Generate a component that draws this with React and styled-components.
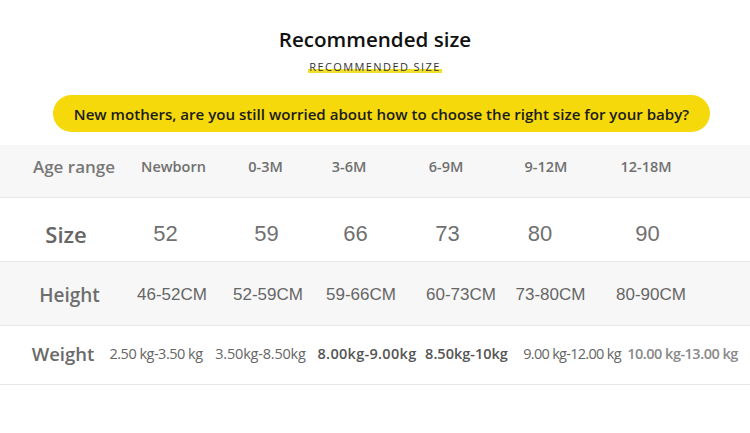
import React from "react";
import styled, { createGlobalStyle } from "styled-components";

const GlobalStyle = createGlobalStyle`
  body {
    margin: 0;
    background: #ffffff;
    font-family: "Open Sans", "Noto Sans", sans-serif;
  }
`;

const Page = styled.div`
  width: 750px;
  height: 433px;
  overflow: hidden;
  padding-top: 26px;
  box-sizing: border-box;
`;

const Title = styled.h1`
  margin: 0;
  text-align: center;
  font-size: 20.6px;
  line-height: 26px;
  font-weight: 600;
  color: #111;
`;

const SubWrap = styled.div`
  display: flex;
  justify-content: center;
  margin-top: 8px;
`;

const Subtitle = styled.span`
  font-size: 11px;
  line-height: 14px;
  letter-spacing: 1.4px;
  color: #333;
  padding: 0 1px;
  background: linear-gradient(transparent 62%, #f2e02c 62%, #f2e02c 92%, transparent 92%);
`;

const Banner = styled.div`
  margin: 21px 40px 0 53px;
  height: 37px;
  border-radius: 19px;
  background: #f5d90b;
  display: flex;
  align-items: center;
  justify-content: center;
  font-size: 15.1px;
  font-weight: 600;
  color: #1b1b1b;
  white-space: nowrap;
`;

const Table = styled.div`
  margin-top: 13px;
  overflow: hidden;
`;

const Row = styled.div`
  display: grid;
  grid-template-columns: ${(p) => p.cols};
  align-items: center;
  height: ${(p) => p.h}px;
  padding-top: ${(p) => p.drop || 0}px;
  padding-bottom: ${(p) => p.lift || 0}px;
  box-sizing: border-box;
  background: ${(p) => (p.shade ? "#f7f7f7" : "#ffffff")};
  border-bottom: 1px solid #e7e7e7;
`;

const Label = styled.div`
  justify-self: center;
  white-space: nowrap;
  font-size: ${(p) => p.size}px;
  font-weight: 600;
  color: ${(p) => p.color || "#6a6a6a"};
`;

const Cell = styled.div`
  justify-self: center;
  white-space: nowrap;
  font-family: ${(p) =>
    p.plain ? '"Liberation Sans", Arial, sans-serif' : '"Open Sans", "Noto Sans", sans-serif'};
  font-size: ${(p) => p.size}px;
  font-weight: ${(p) => p.weight || 400};
  letter-spacing: ${(p) => p.spacing || 0}px;
  color: ${(p) => p.color || "#666"};
`;

// turn the text centre of each column into grid tracks
const tracks = (centres) => {
  let edge = 0;
  return centres
    .map((c) => {
      const w = 2 * (c - edge);
      edge += w;
      return `${w}px`;
    })
    .join(" ");
};

const ages = ["Newborn", "0-3M", "3-6M", "6-9M", "9-12M", "12-18M"];
const sizes = ["52", "59", "66", "73", "80", "90"];
const heights = ["46-52CM", "52-59CM", "59-66CM", "60-73CM", "73-80CM", "80-90CM"];
const weights = [
  { text: "2.50 kg-3.50 kg", weight: 400, color: "#666", spacing: -0.5 },
  { text: "3.50kg-8.50kg", weight: 400, color: "#666", spacing: -0.2 },
  { text: "8.00kg-9.00kg", weight: 600, color: "#555", spacing: 0.3 },
  { text: "8.50kg-10kg", weight: 600, color: "#555", spacing: 0 },
  { text: "9.00 kg-12.00 kg", weight: 400, color: "#666", spacing: -0.7 },
  { text: "10.00 kg-13.00 kg", weight: 600, color: "#8a8a8a", spacing: -0.5 },
];

export default function App() {
  return (
    <Page>
      <GlobalStyle />
      <Title>Recommended size</Title>
      <SubWrap>
        <Subtitle>RECOMMENDED SIZE</Subtitle>
      </SubWrap>
      <Banner>
        New mothers, are you still worried about how to choose the right size for your baby?
      </Banner>
      <Table>
        <Row shade h={53} lift={10} cols={tracks([74, 173.5, 265.5, 349, 446, 546, 646])}>
          <Label size={17} color="#777">Age range</Label>
          {ages.map((a) => (
            <Cell key={a} size={14.5} weight={600} color="#707070">
              {a}
            </Cell>
          ))}
        </Row>
        <Row h={64} drop={8} cols={tracks([66, 165.5, 266.5, 355.5, 447.5, 540, 647.5])}>
          <Label size={22} color="#666">Size</Label>
          {sizes.map((s) => (
            <Cell key={s} plain size={22} color="#707070">
              {s}
            </Cell>
          ))}
        </Row>
        <Row shade h={64} drop={3} cols={tracks([69.5, 172, 268, 361, 461, 550.5, 651])}>
          <Label size={19} color="#6e6e6e">Height</Label>
          {heights.map((h) => (
            <Cell key={h} plain size={17} color="#666">
              {h}
            </Cell>
          ))}
        </Row>
        <Row h={59} lift={4} cols={tracks([63, 156, 260.5, 367, 466.5, 572, 682.5])}>
          <Label size={18.5} color="#6a6a6a">Weight</Label>
          {weights.map((w) => (
            <Cell key={w.text} size={14.5} weight={w.weight} color={w.color} spacing={w.spacing}>
              {w.text}
            </Cell>
          ))}
        </Row>
      </Table>
    </Page>
  );
}
